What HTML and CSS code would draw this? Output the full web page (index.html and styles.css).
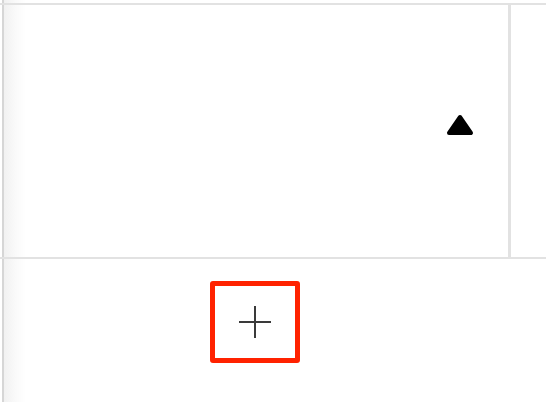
FILE: index.html
```html
<!DOCTYPE html>
<html>
<head>
<meta charset="utf-8">
<link rel="stylesheet" href="styles.css">
</head>
<body>
<div class="page">
  <div class="frame">
    <div class="grid">
      <div class="cell main">
        <svg class="tri" width="28" height="22" viewBox="0 0 28 22">
          <path d="M14 3 L25 19 L3 19 Z" fill="#000" stroke="#000" stroke-width="4" stroke-linejoin="round"/>
        </svg>
      </div>
      <div class="cell side"></div>
    </div>
    <div class="footer">
      <button class="add" aria-label="Add">
        <svg width="34" height="34" viewBox="0 0 34 34">
          <path d="M17 1 V33 M1 17 H33" stroke="#3a3a3a" stroke-width="2" fill="none"/>
        </svg>
      </button>
    </div>
  </div>
</div>
</body>
</html>
```

FILE: styles.css
```css
html, body {
  margin: 0;
  padding: 0;
  height: 100%;
  background: #fff;
  font-family: "Liberation Sans", Arial, sans-serif;
  overflow: hidden;
}
.page {
  height: 100%;
  padding-left: 2px;
  box-sizing: border-box;
}
.frame {
  height: 100%;
  border-left: 2px solid #d6d6d6;
  background: linear-gradient(to right, #f1f1f1 0px, #fafafa 12px, #fff 22px);
  display: flex;
  flex-direction: column;
}
.grid {
  margin-top: 3px;
  margin-left: -4px;
  padding-left: 4px;
  border-top: 2px solid #e2e2e2;
  border-bottom: 2px solid #e2e2e2;
  display: flex;
  height: 252px;
}
.cell.main {
  width: 507px;
  border-right: 3px solid #e2e2e2;
  display: flex;
  align-items: center;
  justify-content: flex-end;
  padding-right: 34px;
  padding-bottom: 12px;
  box-sizing: border-box;
}
.tri {
  display: block;
}
.cell.side {
  flex: 1;
}
.footer {
  display: flex;
  padding-top: 22px;
  padding-left: 206px;
}
.add {
  width: 90px;
  height: 82px;
  border: 5px solid #ff2200;
  border-radius: 3px;
  background: #fff;
  padding: 0;
  display: flex;
  align-items: center;
  justify-content: center;
  margin: 0;
}
.add svg {
  display: block;
}
```
